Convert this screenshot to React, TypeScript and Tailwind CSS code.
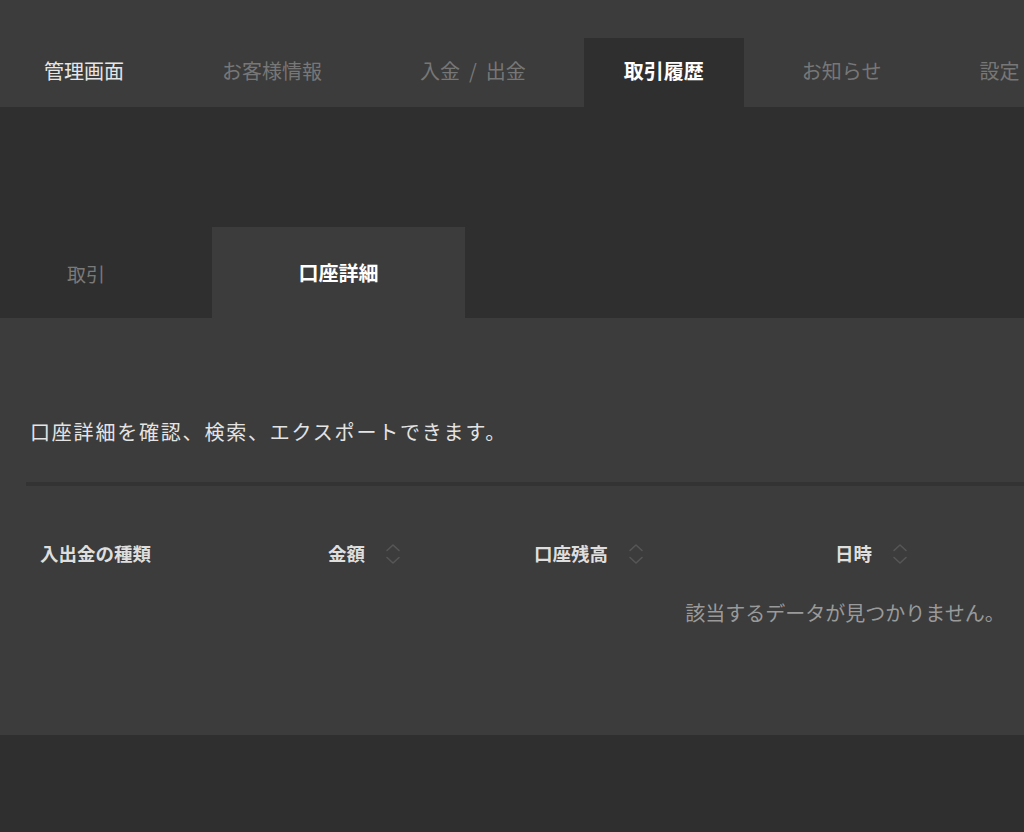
import React from "react";

const navItems = [
  { label: "管理画面", tone: "text-[#e6e6e6]" },
  { label: "お客様情報", tone: "text-[#777777]" },
  { label: "入金/出金", tone: "text-[#777777]" },
  { label: "取引履歴", tone: "text-white font-bold", active: true },
  { label: "お知らせ", tone: "text-[#777777]" },
  { label: "設定", tone: "text-[#777777]" },
];

const SortIcon = () => (
  <svg width="16" height="24" viewBox="0 0 16 24" fill="none" className="ml-[20px]">
    <path d="M2 8.5 8 3l6 5.5" stroke="#565656" strokeWidth="1.6" strokeLinecap="round" strokeLinejoin="round" />
    <path d="M2 15.5 8 21l6-5.5" stroke="#565656" strokeWidth="1.6" strokeLinecap="round" strokeLinejoin="round" />
  </svg>
);

const columns = [
  { label: "入出金の種類", width: "w-[288px]", sort: false },
  { label: "金額", width: "w-[206px]", sort: true },
  { label: "口座残高", width: "w-[301px]", sort: true },
  { label: "日時", width: "w-[300px]", sort: true },
];

export default function App() {
  return (
    <div
      className="w-full h-[832px] overflow-hidden bg-[#2f2f2f]"
      style={{ fontFamily: '"Noto Sans CJK JP", "Noto Sans", sans-serif' }}
    >
      {/* top navigation */}
      <nav className="h-[107px] bg-[#3c3c3c] flex items-end pl-[4px] gap-[18px] whitespace-nowrap">
        {navItems.map((item) => {
          const [a, b] = item.label.split("/");
          return (
            <div
              key={item.label}
              className={`h-[69px] px-10 pb-[3px] flex items-center text-[20px] shrink-0 ${item.tone} ${
                item.active ? "bg-[#2f2f2f]" : ""
              }`}
            >
              {b === undefined ? (
                item.label
              ) : (
                <>
                  {a}
                  <span className="px-[9px]">/</span>
                  {b}
                </>
              )}
            </div>
          );
        })}
      </nav>

      {/* sub tabs */}
      <div className="mt-[120px] flex h-[91px]">
        <div className="w-[212px] h-full flex items-center pl-[67px] pt-[3px] text-[19px] text-[#7a7a7a]">
          取引
        </div>
        <div className="w-[253px] h-full bg-[#3c3c3c] flex items-center justify-center text-[20px] font-bold text-white">
          口座詳細
        </div>
      </div>

      {/* panel */}
      <section className="h-[417px] bg-[#3c3c3c] pt-[100px] overflow-hidden">
        <p className="pl-[30px] text-[20px] leading-[28px] tracking-[0.09em] text-[#e4e4e4] whitespace-nowrap">
          口座詳細を確認、検索、エクスポートできます。
        </p>
        <div className="ml-[26px] mt-[36px] h-[4px] bg-[#333333]" />

        <div className="ml-[28px] w-[1634px]">
          <div className="mt-[38px] h-[60px] flex items-center">
            {columns.map((col) => (
              <div key={col.label} className={`${col.width} shrink-0 pl-[12px] flex items-center`}>
                <span className="text-[18.5px] font-bold text-[#dedede] whitespace-nowrap">{col.label}</span>
                {col.sort && <SortIcon />}
              </div>
            ))}
          </div>
          <div className="h-[58px] flex items-center justify-center text-[20px] text-[#9a9a9a] whitespace-nowrap">
            該当するデータが見つかりません。
          </div>
        </div>
      </section>
    </div>
  );
}
